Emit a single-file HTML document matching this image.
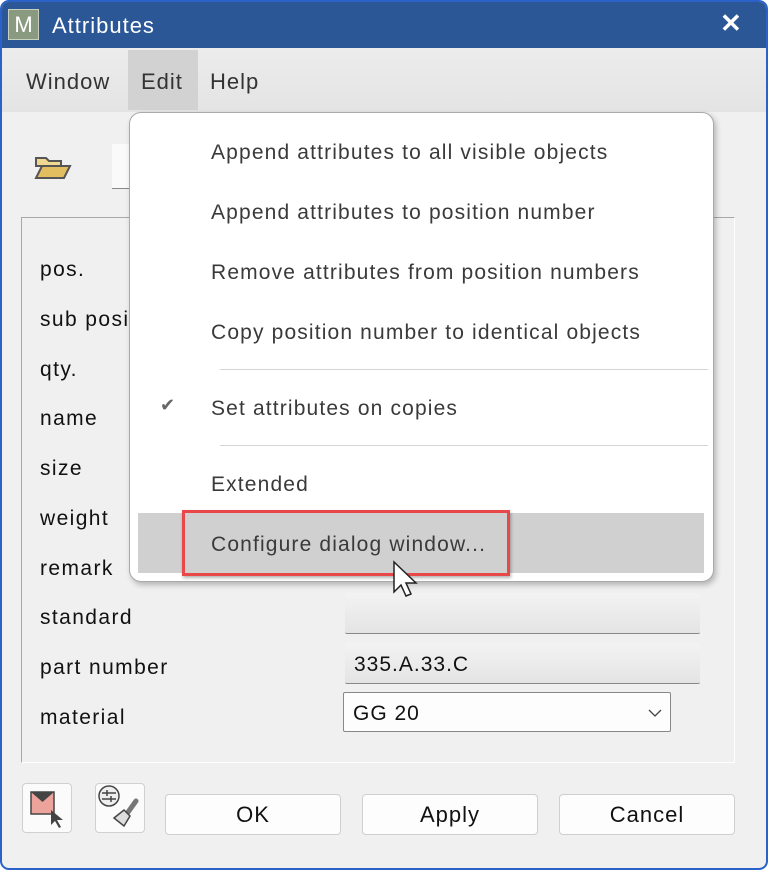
<!DOCTYPE html>
<html><head><style>
*{margin:0;padding:0;box-sizing:border-box}
body{width:768px;height:870px;background:#fff;font-family:"Liberation Sans",sans-serif;position:relative;overflow:hidden;letter-spacing:1px}
.win{position:absolute;left:0;top:0;width:768px;height:870px;border:2px solid #2a62c9;border-radius:9px;background:#f0f0f0;overflow:hidden}
.title{position:absolute;left:0;top:0;width:766px;height:46px;background:#2b5797;color:#fff;font-size:22px}
.abs{position:absolute}
.lbl{position:absolute;left:38px;font-size:21px;color:#111;letter-spacing:1.4px}
.field{position:absolute;left:343px;width:355px;height:41px;background:linear-gradient(#f3f3f3,#e4e4e4);border-bottom:1px solid #888;border-radius:2px}
.btn{position:absolute;top:792px;height:41px;width:176px;background:#fdfdfd;border:1px solid #cfcfcf;border-radius:4px;font-size:22px;text-align:center;line-height:40px;color:#111}
.menu{position:absolute;left:129px;top:112px;width:585px;height:470px;background:#fff;border:1px solid #aaa;border-radius:12px;box-shadow:2px 3px 6px rgba(0,0,0,.25)}
.mi{position:absolute;left:81px;font-size:21px;color:#3a3a3a;letter-spacing:1.15px}
</style></head><body>
<div class="win">
<div class="title">
 <div class="abs" style="left:6px;top:7px;width:31px;height:31px;background:#8a9a80;border:1px solid #c8d0c0;color:#fff;font-size:22px;text-align:center;line-height:30px;letter-spacing:0">M</div>
 <div class="abs" style="left:50px;top:11px">Attributes</div>
 <div class="abs" style="left:718px;top:6px;font-size:26px;font-weight:bold">✕</div>
</div>
<div class="abs" style="left:0;top:46px;width:766px;height:64px;background:linear-gradient(#ececec,#e4e4e4)"></div>
<div class="abs" style="left:126px;top:48px;width:70px;height:60px;background:#d2d2d2"></div>
<div class="abs" style="left:24px;top:67px;font-size:22px;color:#333">Window</div>
<div class="abs" style="left:139px;top:67px;font-size:22px;color:#333">Edit</div>
<div class="abs" style="left:208px;top:67px;font-size:22px;color:#333">Help</div>
<svg class="abs" style="left:32px;top:152px" width="40" height="28"><path d="M2 4h10l3 3h12v5H2z" fill="#f0d890" stroke="#555" stroke-width="2"/><path d="M2 24l6-12h28l-6 12z" fill="#e2be60" stroke="#555" stroke-width="2"/></svg>
<div class="abs" style="left:110px;top:142px;width:30px;height:45px;background:#fafafa;border-bottom:1px solid #888"></div>
<div class="abs" style="left:19px;top:215px;width:714px;height:546px;border:1px solid #a8a8a8;border-right-color:#fff;border-bottom-color:#fff"></div>
<div class="lbl" style="top:256px">pos.</div>
<div class="lbl" style="top:306px">sub position</div>
<div class="lbl" style="top:356px">qty.</div>
<div class="lbl" style="top:405px">name</div>
<div class="lbl" style="top:455px">size</div>
<div class="lbl" style="top:505px">weight</div>
<div class="lbl" style="top:555px">remark</div>
<div class="lbl" style="top:604px">standard</div>
<div class="lbl" style="top:654px">part number</div>
<div class="lbl" style="top:704px">material</div>
<div class="field" style="top:591px"></div>
<div class="field" style="top:641px;font-size:21px;padding:10px 9px;color:#111">335.A.33.C</div>
<div class="abs" style="left:341px;top:690px;width:328px;height:40px;background:#fdfdfd;border:1px solid #888;border-radius:2px;font-size:21px;padding:9px 9px;color:#111">GG 20<svg class="abs" style="left:304px;top:15px" width="14" height="10"><path d="M1 2l6 6 6-6" fill="none" stroke="#444" stroke-width="1.3"/></svg></div>
<div class="abs" style="left:20px;top:781px;width:50px;height:50px;background:#fbfbfb;border:1px solid #d0d0d0;border-radius:4px"><svg width="50" height="50"><rect x="8" y="8" width="23" height="22" fill="#eca39c" stroke="#444" stroke-width="1.5"/><path d="M8 8h23l-11.5 10z" fill="#444"/><path d="M28 26v15l4-4 4 7 2-1-4-7h6z" fill="#444"/></svg></div>
<div class="abs" style="left:93px;top:781px;width:50px;height:50px;background:#fbfbfb;border:1px solid #d0d0d0;border-radius:4px"><svg width="50" height="50"><circle cx="13" cy="12" r="10" fill="#eee" stroke="#444" stroke-width="1.5"/><path d="M6 9h14M6 15h14M11 6v6M15 12v6" stroke="#444" stroke-width="1.5"/><path d="M40 17l-10 14" stroke="#777" stroke-width="5" stroke-linecap="round"/><path d="M18 34l10-8 6 6-6 10z" fill="#ddd" stroke="#444" stroke-width="1.5"/></svg></div>
<div class="btn" style="left:163px">OK</div>
<div class="btn" style="left:360px">Apply</div>
<div class="btn" style="left:557px">Cancel</div>
</div>
<div class="menu">
 <div class="mi" style="top:28px">Append attributes to all visible objects</div>
 <div class="mi" style="top:88px">Append attributes to position number</div>
 <div class="mi" style="top:148px">Remove attributes from position numbers</div>
 <div class="mi" style="top:208px">Copy position number to identical objects</div>
 <div class="abs" style="left:90px;top:256px;width:488px;height:1px;background:#d4d4d4"></div>
 <div class="abs" style="left:30px;top:282px;font-size:18px;color:#666">✔</div>
 <div class="mi" style="top:284px">Set attributes on copies</div>
 <div class="abs" style="left:90px;top:332px;width:488px;height:1px;background:#d4d4d4"></div>
 <div class="mi" style="top:360px">Extended</div>
 <div class="abs" style="left:8px;top:400px;width:566px;height:60px;background:#d0d0d0"></div>
 <div class="mi" style="top:420px">Configure dialog window...</div>
</div>
<div class="abs" style="left:182px;top:510px;width:328px;height:66px;border:3px solid #e84848;box-shadow:1px 2px 3px rgba(0,0,0,.3)"></div>
<svg class="abs" style="left:392px;top:560px" width="28" height="42"><path d="M2 2v30l7-7 5 11 5-2-5-11h10z" fill="#fff" stroke="#222" stroke-width="1.5"/></svg>
</body></html>
